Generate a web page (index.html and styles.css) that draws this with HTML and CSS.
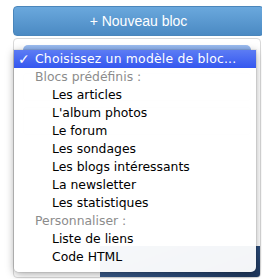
FILE: index.html
```html
<!DOCTYPE html>
<html>
<head>
    <title>Nouveau bloc</title>
    <link rel="stylesheet" href="styles.css">
</head>
<body>
    <div class="page">
        <button class="new-btn">+ Nouveau bloc</button>
        <div class="panel">
            <div class="select-bar"></div>
            <div class="field"></div>
            <div class="field short"></div>
            <div class="photo"></div>
        </div>
    </div>

    <ul class="menu">
        <li class="item selected"><span class="check">✓</span>Choisissez un modèle de bloc...</li>
        <li class="group">Blocs prédéfinis :</li>
        <li class="item">Les articles</li>
        <li class="item">L'album photos</li>
        <li class="item">Le forum</li>
        <li class="item">Les sondages</li>
        <li class="item">Les blogs intéressants</li>
        <li class="item">La newsletter</li>
        <li class="item">Les statistiques</li>
        <li class="group">Personnaliser :</li>
        <li class="item">Liste de liens</li>
        <li class="item">Code HTML</li>
    </ul>
</body>
</html>
```

FILE: styles.css
```css
html, body {
    margin: 0;
    height: 100%;
    overflow: hidden;
    background: #fff;
}

.page {
    padding: 6px 0 0 13px;
}

.new-btn {
    display: block;
    width: 251px;
    height: 30px;
    border: 1px solid #4a86bb;
    border-radius: 4px;
    background: linear-gradient(#6aa8dd, #4b8ac3);
    color: #fff;
    font: 14px "Liberation Sans", Arial, sans-serif;
    padding: 0 0 1px 0;
}

.panel {
    position: relative;
    margin-top: 2px;
    width: 246px;
    height: 238px;
    border: 1px solid #d9d9d9;
    border-radius: 4px;
    background: #fff;
    overflow: hidden;
}

.select-bar {
    margin: 6px 9px 0 9px;
    height: 16px;
    border-radius: 5px 5px 0 0;
    background: linear-gradient(#9dbdf0, #5f8fe6);
}

.field {
    margin: 12px 9px 0 9px;
    height: 26px;
    border: 1px solid #e2e2e2;
    border-radius: 3px;
}

.field.short {
    margin-top: 6px;
}

.photo {
    position: absolute;
    left: 86px;
    top: 207px;
    width: 170px;
    height: 40px;
    background: linear-gradient(160deg, #4a6c9e, #2a4a78 60%, #1a2f50);
}

.menu {
    position: absolute;
    left: 14px;
    top: 50px;
    width: 242px;
    margin: 0;
    padding: 0 0 6px 0;
    list-style: none;
    background: rgba(255, 255, 255, 0.95);
    border-radius: 0 0 5px 5px;
    box-shadow: 0 2px 9px rgba(0, 0, 0, 0.35), 0 0 0 1px rgba(0, 0, 0, 0.06);
    font: 12.4px "DejaVu Sans", Verdana, sans-serif;
}

.menu li {
    height: 18px;
    line-height: 18px;
    white-space: nowrap;
}

.group {
    padding-left: 21px;
    color: #8c8c8c;
}

.item {
    padding-left: 38px;
    color: #000;
}

.item.selected {
    padding-left: 21px;
    color: #fff;
    letter-spacing: 0.2px;
    background: linear-gradient(#5c7cf4, #3457ef);
    position: relative;
}

.check {
    position: absolute;
    left: 4px;
    font-size: 14px;
    font-weight: bold;
}
```
